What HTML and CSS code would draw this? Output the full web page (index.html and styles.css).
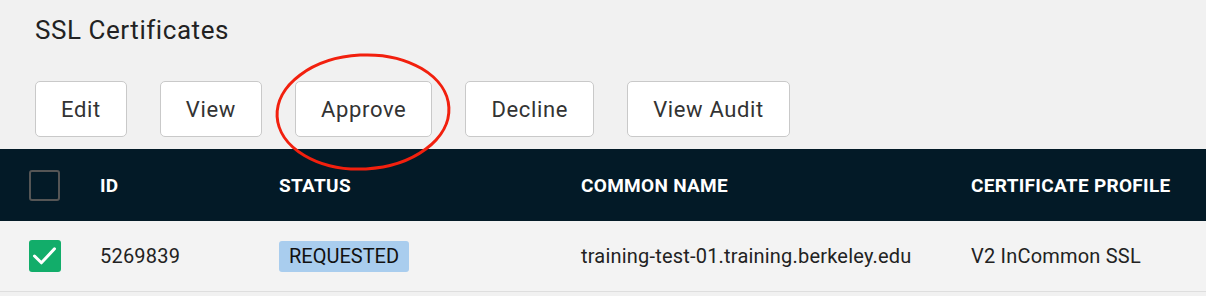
FILE: index.html
```html
<!DOCTYPE html>
<html lang="en">
<head>
    <meta charset="UTF-8">
    <title>SSL Certificates</title>
    <link rel="stylesheet" href="styles.css">
</head>
<body>
    <div class="page">
        <h1 class="title">SSL Certificates</h1>

        <div class="toolbar">
            <button class="btn">Edit</button>
            <button class="btn">View</button>
            <button class="btn btn-marked">Approve
                <svg class="circle-mark" width="190" height="124" viewBox="0 0 190 124">
                    <ellipse cx="95" cy="62" rx="86" ry="57" fill="none" stroke="#f2200e" stroke-width="3" transform="rotate(-3 95 62)"/>
                </svg>
            </button>
            <button class="btn">Decline</button>
            <button class="btn">View Audit</button>
        </div>

        <div class="table">
            <div class="row head">
                <div class="cell"><span class="checkbox"></span></div>
                <div class="cell">ID</div>
                <div class="cell">STATUS</div>
                <div class="cell">COMMON NAME</div>
                <div class="cell">CERTIFICATE PROFILE</div>
            </div>
            <div class="row">
                <div class="cell">
                    <span class="checkbox checked">
                        <svg width="32" height="32" viewBox="0 0 32 32"><path d="M5.5 16 L12.4 22.8 L25.5 8.8" fill="none" stroke="#fff" stroke-width="3" stroke-linecap="round" stroke-linejoin="round"/></svg>
                    </span>
                </div>
                <div class="cell">5269839</div>
                <div class="cell"><span class="badge">REQUESTED</span></div>
                <div class="cell">training-test-01.training.berkeley.edu</div>
                <div class="cell">V2 InCommon SSL</div>
            </div>
        </div>
    </div>
</body>
</html>
```

FILE: styles.css
```css
body {
    margin: 0;
    font-family: 'Roboto', 'Liberation Sans', sans-serif;
    background-color: #f1f1f1;
    color: #222;
}

.page {
    width: 1206px;
    height: 296px;
    overflow: hidden;
}

.title {
    margin: 0;
    padding: 14px 0 0 35px;
    height: 81px;
    box-sizing: border-box;
    font-size: 26px;
    font-weight: 400;
    line-height: 32px;
    letter-spacing: 0.55px;
    color: #222;
}

.toolbar {
    display: flex;
    gap: 33px;
    padding-left: 35px;
    height: 68px;
}

.btn {
    position: relative;
    height: 56px;
    padding: 0 25px;
    background-color: #fff;
    border: 1px solid #c9c9c9;
    border-radius: 5px;
    font-family: inherit;
    font-size: 22px;
    letter-spacing: 0.65px;
    color: #333;
    cursor: pointer;
}

.circle-mark {
    position: absolute;
    left: -28px;
    top: -32px;
    pointer-events: none;
}

.row {
    display: grid;
    grid-template-columns: 71px 179px 302px 390px 1fr;
    align-items: center;
    padding-left: 29px;
    height: 70px;
    background-color: #f3f3f3;
    border-bottom: 1px solid #dedede;
    font-size: 20px;
    letter-spacing: 0.2px;
    color: #222;
}

.row.head {
    height: 72px;
    background-color: #031a27;
    border-bottom: none;
    color: #fff;
    font-size: 19px;
    font-weight: 700;
    letter-spacing: 0.3px;
}

.cell {
    display: flex;
    align-items: center;
}

.checkbox {
    display: inline-flex;
    align-items: center;
    justify-content: center;
    width: 31px;
    height: 31px;
    box-sizing: border-box;
    border: 2px solid #555;
    border-radius: 3px;
}

.checkbox.checked {
    width: 32px;
    height: 32px;
    background-color: #12ad6a;
    border: none;
}

.badge {
    display: inline-block;
    padding: 4px 10px;
    background-color: #a9cdee;
    border-radius: 3px;
    font-size: 20px;
    letter-spacing: 0;
    color: #111;
    line-height: 23px;
}
```
